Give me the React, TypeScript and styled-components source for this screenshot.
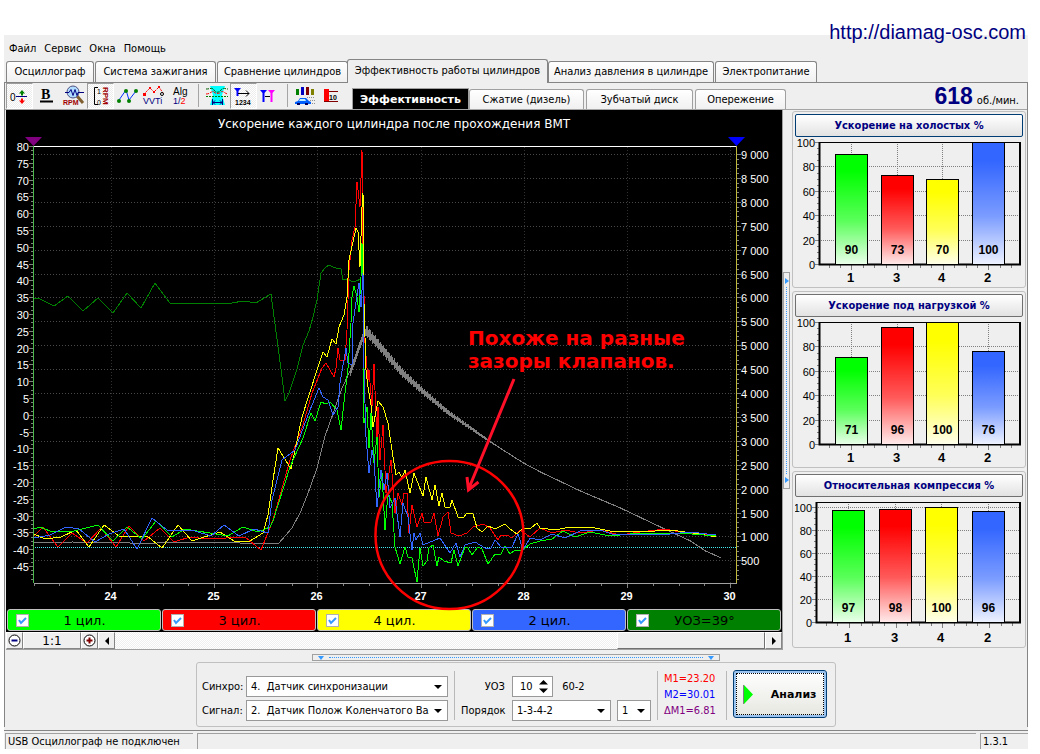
import React, { useState } from "react";
import styled, { createGlobalStyle, css } from "styled-components";

const UI = `"DejaVu Sans Condensed", "DejaVu Sans", "Liberation Sans", sans-serif`;
const WIDE = `"DejaVu Sans", "Liberation Sans", sans-serif`;
const ARIAL = `"Liberation Sans", sans-serif`;

const GlobalStyle = createGlobalStyle`
  * { box-sizing: border-box; }
  body { margin: 0; background: #fff; color: #000; font: 11px ${UI}; }
  button, input, select { font: inherit; color: inherit; margin: 0; }
`;

const Page = styled.div`
  padding: 0 12px 0 4px;
`;

const Banner = styled.header`
  height: 35px;
  padding: 20px 2px 0 0;
  text-align: right;
  position: relative;
`;

const SiteLink = styled.a`
  color: #000080;
  font: 20px/24px ${ARIAL};
  text-decoration: none;
`;

const AppWindow = styled.main`
  background: #efefef;
`;

const MenuBar = styled.nav`
  display: flex;
  gap: 8px;
  height: 24px;
  padding: 0 5px;
`;

const MenuItem = styled.button`
  border: 0;
  padding: 2px 0 0;
  background: none;
`;

const Tabs = styled.div`
  display: flex;
  align-items: flex-end;
  height: 23px;
  padding-left: 2px;
`;

const Tab = styled.button<{ $width: number; $active?: boolean }>`
  width: ${(p) => p.$width}px;
  height: 21px;
  margin-right: 1px;
  padding: 0 0 1px;
  white-space: nowrap;
  border: 1px solid #858585;
  border-bottom: 0;
  border-radius: 3px 3px 0 0;
  background: linear-gradient(#fff, #f0f0f0);
  ${(p) =>
    p.$active &&
    css`
      height: 24px;
      margin: 0 0 -1px -2px;
      padding-bottom: 3px;
      background: #efefef;
      z-index: 1;
    `}
`;

const TabPage = styled.div`
  border: solid #858585;
  border-width: 1px 1px 0;
`;

const ToolBar = styled.div`
  display: flex;
  align-items: flex-end;
  height: 27px;
  border-bottom: 1px solid #a5a5a5;
`;

const Tools = styled.div`
  display: flex;
  align-self: stretch;
  width: 347px;
  padding-left: 1px;
`;

const Tool = styled.button<{ $pressed?: boolean }>`
  width: 27px;
  height: 26px;
  padding: 0;
  border: 1px solid transparent;
  background: none;
  svg {
    display: block;
  }
  ${(p) =>
    p.$pressed &&
    css`
      border-color: #9c9c9c #fff #fff #9c9c9c;
      background: repeating-conic-gradient(#fff 0 25%, #ececec 0 50%) 0 0 / 2px 2px;
    `}
`;

const ToolLine = styled.span`
  width: 1px;
  margin: 1px 4px 2px 3px;
  background: #a5a5a5;
`;

const SubTab = styled.button<{ $width: number; $active?: boolean }>`
  width: ${(p) => p.$width}px;
  height: 20px;
  margin-right: 2px;
  padding: 0;
  border: 1px solid #a0a0a0;
  border-bottom: 0;
  border-radius: 3px 3px 0 0;
  background: linear-gradient(#fff, #f0f0f0);
  ${(p) =>
    p.$active &&
    css`
      height: 21px;
      margin-right: 0;
      border-radius: 0;
      background: #000;
      color: #fff;
      font: bold 11px ${WIDE};
    `}
`;

const Rpm = styled.div`
  display: flex;
  align-items: baseline;
  gap: 4px;
  margin-left: auto;
  padding-right: 8px;
  b {
    color: #000080;
    font: bold 23px/26px ${ARIAL};
  }
`;

const Work = styled.div`
  display: flex;
`;

const ChartColumn = styled.section`
  flex: 1;
  min-width: 0;
  margin-left: 1px;
`;

const ChartSvg = styled.svg`
  display: block;
  position: relative;
  width: 100%;
  overflow: visible;
  background: #000;
  pointer-events: none;
`;

const Legend = styled.div`
  display: grid;
  grid-template-columns: repeat(5, 1fr);
  gap: 1px;
  padding: 1px;
  background: #000;
`;

const LegendItem = styled.label<{ $color: string }>`
  display: flex;
  align-items: center;
  height: 22px;
  padding: 0 8px;
  border: 1px solid #c0c0c0;
  border-radius: 3px;
  background: ${(p) => p.$color};
  font: 13px ${WIDE};
  input {
    appearance: none;
    width: 13px;
    height: 13px;
    border: 1px solid #b0b0b0;
    background: #fff;
  }
  input:checked {
    background: #fff
      url("data:image/svg+xml,%3Csvg xmlns='http://www.w3.org/2000/svg' viewBox='0 0 11 11'%3E%3Cpath d='M2 5l2 3 5-5' fill='none' stroke='%233399ff' stroke-width='2'/%3E%3C/svg%3E");
  }
  span {
    flex: 1;
    padding-right: 12px;
    text-align: center;
  }
`;

const ScrollRow = styled.div`
  display: flex;
  height: 18px;
  border-bottom: 1px solid #a0a0a0;
  background: #efefef;
`;

const FlatButton = styled.button<{ $width?: number }>`
  width: ${(p) => p.$width || 17}px;
  padding: 0;
  border: 1px solid;
  border-color: #fff #858585 #858585 #fff;
  background: #efefef;
  font: 12px ${WIDE};
  svg {
    display: block;
    margin: auto;
  }
`;

const Track = styled.div`
  flex: 1;
  display: flex;
  justify-content: flex-end;
  background: repeating-conic-gradient(#fff 0 25%, #efefef 0 50%) 0 0 / 2px 2px;
`;

const Thumb = styled.div`
  width: 148px;
  border: 1px solid;
  border-color: #fff #707070 #707070 #fff;
  background: #efefef;
`;

const SideSplitter = styled.div`
  display: flex;
  flex-direction: column;
  justify-content: center;
  width: 10px;
  border-left: 1px solid #a0a0a0;
`;

const SideHandle = styled.div`
  display: flex;
  flex-direction: column;
  align-items: center;
  justify-content: space-between;
  width: 7px;
  height: 217px;
  padding: 5px 0;
  border: 1px solid #a0a0a0;
  i {
    border: solid transparent;
    border-width: 3px 0 3px 4px;
    border-left-color: #3399ff;
  }
  span {
    flex: 1;
    margin: 3px 0;
    border-left: 1px dotted #3399ff;
  }
`;

const BottomSplitter = styled.div`
  display: flex;
  align-items: center;
  gap: 5px;
  width: 408px;
  height: 7px;
  margin: 4px auto 1px;
  padding: 0 5px;
  border: 1px solid #a0a0a0;
  i {
    border: solid transparent;
    border-width: 4px 3px 0;
    border-top-color: #3399ff;
  }
  span {
    flex: 1;
    border-top: 1px dotted #3399ff;
  }
`;

const SideColumn = styled.aside`
  display: flex;
  flex-direction: column;
  gap: 3px;
  width: 235px;
  padding: 1px 1px 0 0;
`;

const Group = styled.section`
  padding: 2px;
  border: 1px solid #c0c0c0;
  border-radius: 3px;
  svg {
    display: block;
    width: 100%;
  }
`;

const GroupButton = styled.button<{ $hot?: boolean }>`
  display: block;
  width: 100%;
  height: 23px;
  padding: 0;
  border: 1px solid ${(p) => (p.$hot ? "#003c74" : "#707070")};
  border-radius: 2px;
  background: linear-gradient(#fff, #e2e2e2);
  color: #000080;
  font-weight: bold;
`;

const Controls = styled.form`
  display: flex;
  justify-content: center;
  gap: 6px;
  width: 640px;
  height: 65px;
  margin: 0 auto;
  padding: 7px 5px 0;
  border: 1px solid #c0c0c0;
  border-radius: 3px;
`;

const Fields = styled.div<{ $labels: number }>`
  display: grid;
  grid-template-columns: ${(p) => p.$labels}px auto;
  grid-auto-rows: 21px;
  align-content: center;
  align-items: center;
  gap: 3px 7px;
  flex: ${(p) => (p.$labels === 37 ? 1 : "none")};
`;

const FieldRow = styled.div`
  display: flex;
  align-items: center;
  gap: 6px;
`;

const RightLabel = styled.label`
  text-align: right;
`;

const SelectBox = styled.div<{ $width: number }>`
  position: relative;
  width: ${(p) => p.$width}px;
  &::after {
    content: "";
    position: absolute;
    right: 6px;
    top: 9px;
    border: solid transparent;
    border-width: 4px 4px 0;
    border-top-color: #000;
    pointer-events: none;
  }
  select {
    appearance: none;
    display: block;
    width: 100%;
    height: 21px;
    padding: 0 18px 0 4px;
    border: 1px solid #999;
    border-radius: 0;
    background: #fff;
    white-space: pre;
  }
`;

const Spin = styled.div`
  display: flex;
  align-items: center;
  width: 41px;
  height: 21px;
  border: 1px solid #999;
  background: #fff;
  input {
    appearance: textfield;
    width: 26px;
    padding: 0 0 0 7px;
    border: 0;
    background: none;
  }
  input::-webkit-inner-spin-button {
    display: none;
  }
`;

const Divider = styled.span`
  width: 1px;
  margin: 1px 0 6px;
  background: #b8b8b8;
`;

const Marks = styled.div`
  width: 58px;
  padding-top: 1px;
  line-height: 16px;
`;

const Mark = styled.div<{ $color: string }>`
  color: ${(p) => p.$color};
`;

const AnalyzeButton = styled.button`
  display: flex;
  align-items: center;
  gap: 18px;
  width: 97px;
  height: 48px;
  margin-right: 3px;
  padding: 0 9px;
  border: 1px solid #003c74;
  border-radius: 3px;
  outline: 1px dotted #000;
  outline-offset: -4px;
  background: linear-gradient(#fff, #e6e6e0);
  box-shadow: inset 0 0 0 2px #9cc4f0;
  font: bold 11px ${WIDE};
`;

const StatusBar = styled.footer`
  display: flex;
  gap: 4px;
  height: 19px;
  margin-top: 3px;
  padding: 2px 0 0 1px;
  border-top: 1px solid #858585;
`;

const StatusCell = styled.div<{ $width?: number }>`
  flex: ${(p) => (p.$width ? "none" : 1)};
  width: ${(p) => p.$width}px;
  padding: 1px 2px;
  line-height: 14px;
  white-space: nowrap;
  border: solid #a0a0a0;
  border-width: 1px 0 0 1px;
`;

/* ---------- traces of the main chart ---------- */

const ADVANCE =
  "34,298 40,299 54,306 68,296 83,311 98,298 113,313 127,293 141,308 155,283 170,303 232,303 243,301 256,303 271,294 281,369 285,401 289,393 297,369 303,345 309,331 313,317 317,300 321,273 325,268 329,265 333,267 336,268 341,269 343,280 348,279 351,281 356,281 361,279";
const CYL1 =
  "34,529 40,527 50,531 70,532 98,525 113,541 127,527 142,539 156,521 172,537 185,529 228,536 243,527 258,532 270,527 273,521 290,467 303,438 311,413 315,421 321,402 326,404 330,402 337,410 341,430 345,393 348,368 351,323 352,297 354,286 357,297 359,312 361,277 362,243 363,277 364,423 367,407 369,448 371,413 374,463 377,437 379,497 382,473 385,530 388,493 392,503 395,547 400,564 405,547 408,557 412,558 417,582 420,548 423,566 427,561 429,548 433,545 437,566 439,557 444,561 451,563 454,550 458,566 465,547 468,548 472,555 478,547 482,549 488,564 495,554 501,554 505,546 510,554 515,550 523,550 530,544 540,541 552,539 563,531 575,537 590,532 610,536 640,533 680,533 716,536";
const CYL3 =
  "34,536 43,527 58,547 72,533 87,543 101,528 116,547 129,526 144,541 160,528 174,542 190,537 208,539 245,537 261,550 273,520 290,460 303,425 312,393 322,368 326,363 330,370 334,377 336,368 338,348 340,360 345,360 347,330 349,270 352,240 355,227 357,182 360,207 362,150 363,247 365,343 368,380 369,370 372,407 374,364 377,443 378,407 380,460 383,425 386,493 391,460 395,513 398,493 402,505 404,493 407,493 409,533 412,505 417,527 422,513 424,522 431,522 434,513 438,536 443,517 448,512 451,533 459,536 467,533 473,527 483,524 490,528 498,540 501,535 507,535 512,538 520,530 530,537 540,528 552,533 565,530 580,533 600,530 620,535 640,532 665,529 680,532 716,536";
const CYL4 =
  "34,534 45,539 61,537 76,530 89,547 104,525 119,536 147,536 162,548 178,525 192,541 220,532 234,541 250,541 263,533 268,515 273,480 278,448 291,469 302,417 317,370 323,352 327,357 332,339 336,344 339,327 344,315 347,297 349,260 356,228 358,232 360,267 362,207 363,193 364,303 366,370 368,387 371,405 373,427 378,401 383,407 388,423 393,457 396,475 399,472 402,478 405,470 410,493 414,473 419,486 423,496 426,477 432,500 435,485 439,506 442,493 445,507 450,507 452,500 458,517 463,518 467,513 473,514 477,528 482,532 488,526 493,528 497,528 505,524 510,529 517,534 523,528 530,529 537,523 540,528 555,530 570,527 595,528 610,531 640,532 670,530 700,534 716,537";
const CYL2 =
  "34,538 50,535 66,527 79,529 95,542 109,534 124,529 137,549 152,518 167,530 195,531 211,536 224,525 239,536 254,529 268,533 272,500 282,460 295,450 310,410 319,388 323,397 328,400 333,415 338,407 340,383 346,348 348,363 352,365 353,323 356,302 359,283 361,307 363,273 364,368 366,437 369,473 372,450 374,460 377,507 381,470 384,490 387,473 390,508 395,498 400,537 403,503 408,517 412,550 414,533 416,540 420,533 423,545 440,538 450,553 456,543 460,557 465,545 475,542 485,548 491,548 495,540 502,548 512,547 518,534 523,550 530,538 540,540 552,534 565,538 580,531 600,530 615,535 640,534 670,534 690,532 716,535";
const SPEED_RISE =
  "34,543 50,542 61,543 72,542 130,543 150,544 165,542 240,543 267,544 279,543 292,528 301,511 310,488 317,468 325,436 334,411 342,388 351,369";

const SPEED_FALL = [
  [350, 372], [357, 352], [363, 335], [366, 331], [380, 347], [401, 372], [422, 391],
  [447, 412], [470, 428], [490, 442], [523, 463], [540, 472], [580, 491], [620, 508],
  [660, 527], [690, 541], [705, 551], [721, 558],
];

// the crank speed trace is noisy at high rpm and calms down as it falls
const noisySpeed = () => {
  let d = "";
  for (let i = 0; i < SPEED_FALL.length - 1; i++) {
    const [x0, y0] = SPEED_FALL[i];
    const [x1, y1] = SPEED_FALL[i + 1];
    for (let x = x0; x < x1; x++) {
      const y = y0 + ((y1 - y0) * (x - x0)) / (x1 - x0);
      const noise = 0.75 + 0.25 * Math.sin(x * 2.3);
      const amp = x < 364 ? 4 : Math.max(0.6, (6.5 - (x - 364) / 24) * noise);
      d += `M${x}.5 ${Math.round(y - amp)}V${Math.round(y + amp)}`;
    }
  }
  return d;
};

const range = (n: number) => Array.from({ length: n }, (_, i) => i);

function MainChart() {
  const leftY = (v: number) => Math.round(146 + (80 - v) * 3.36) + 0.5;
  const rightY = (v: number) => Math.round(154 + ((9000 - v) * 23.9) / 500) + 0.5;
  const gridX = (v: number) => Math.round(111 + (v - 24) * 103.2) + 0.5;
  const traces = [
    [CYL3, "#ff0000"],
    [CYL4, "#ffff00"],
    [CYL1, "#00ff00"],
    [CYL2, "#3366ff"],
  ];
  return (
    <ChartSvg viewBox="6 110 776 498" fontFamily={ARIAL} fontSize="11" fill="#fff">
      <text x="394" y="128" textAnchor="middle" fontSize="12" fontFamily={WIDE}>
        Ускорение каждого цилиндра после прохождения ВМТ
      </text>
      <g stroke="#484848" strokeDasharray="1 2" shapeRendering="crispEdges">
        {range(18).map((i) => (
          <path key={i} d={`M35 ${rightY(500 + i * 500)}H736`} />
        ))}
        {range(7).map((i) => (
          <path key={i} d={`M${gridX(24 + i)} 147V583`} stroke="#303030" />
        ))}
      </g>
      <path d="M35 547.5H736" stroke="#40e8f0" strokeDasharray="1 1" />
      <path d="M34 583.5H737" stroke="#a0a0a0" />
      <path d="M34 146.5H737" stroke="#fff" />
      <g stroke="#808080">
        {range(104).map((i) => (
          <path key={i} d={`M${i % 4 ? 31 : 29} ${leftY(80 - i * 1.25)}H33`} />
        ))}
        {range(90).map((i) => (
          <path key={i} d={`M737 ${rightY(9000 - i * 100)}h${i % 5 ? 2 : 4}`} />
        ))}
        {range(28).map((i) => (
          <path key={i} d={`M${gridX(23.25 + i * 0.25)} 584v${i % 4 === 3 ? 4 : 2}`} />
        ))}
      </g>
      <path d="M33.5 146V583" stroke="#4cb84c" />
      <path d="M736.5 146V583" stroke="#c0b838" />
      {range(26).map((i) => (
        <text key={i} x="29" y={leftY(80 - i * 5) + 4} textAnchor="end">
          {80 - i * 5}
        </text>
      ))}
      {range(18).map((i) => {
        const v = 9000 - i * 500;
        return (
          <text key={i} x="741" y={rightY(v) + 4}>
            {v >= 1000 ? `${Math.floor(v / 1000)} ${String(v % 1000).padStart(3, "0")}` : v}
          </text>
        );
      })}
      {range(7).map((i) => (
        <text key={i} x={gridX(24 + i) - 1} y="600" textAnchor="middle" fontWeight="bold">
          {24 + i}
        </text>
      ))}
      <g fill="none" strokeWidth="1" shapeRendering="crispEdges">
        <polyline points={ADVANCE} stroke="#008000" />
        <polyline points={SPEED_RISE} stroke="#808080" />
        <path d={noisySpeed()} stroke="#808080" />
        {traces.map(([points, color]) => (
          <polyline key={color} points={points} stroke={color} />
        ))}
      </g>
      <path d="M25 137h17l-8.500 9z" fill="#800080" />
      <path d="M728 137h17l-8.500 9z" fill="#0000ff" />
      <g fill="none" stroke="#ff0000" strokeWidth="2.500">
        <circle cx="449.500" cy="535" r="74" />
        <path d="M514 379L469 488M467 477l1.500 13 10-8" stroke="#ff0f28" strokeWidth="3" />
      </g>
      <g fill="#ff0000" fontFamily={WIDE} fontWeight="bold" fontSize="20">
        <text x="468" y="345">Похоже на разные</text>
        <text x="468" y="368">зазоры клапанов.</text>
      </g>
    </ChartSvg>
  );
}

const BARS = [
  { cyl: 1, color: "#00ff00" },
  { cyl: 3, color: "#ff0000" },
  { cyl: 4, color: "#ffff00" },
  { cyl: 2, color: "#3366ff" },
];

function BarChart(props: { id: string; values: number[]; max: number; left: number }) {
  const { id, values, max, left } = props;
  const bottom = max > 100 ? 125 : 127;
  const scale = (bottom - 5) / max;
  const y = (v: number) => Math.round(bottom - v * scale) + 0.5;
  const step = (193 - (left + 32)) / 3;
  const x = (i: number) => Math.round(left + 32 + i * step) + 0.5;
  return (
    <svg viewBox="0 0 228 148" fontFamily={ARIAL} fontSize="11">
      <defs>
        {BARS.map((b) => (
          <linearGradient key={b.cyl} id={id + b.cyl} x2="0" y2="1">
            <stop offset="0.15" stopColor={b.color} />
            <stop offset="0.6" stopColor={b.color} stopOpacity="0.65" />
            <stop offset="1" stopColor={b.color} stopOpacity="0.08" />
          </linearGradient>
        ))}
      </defs>
      <g stroke="#808080">
        {range(6).map((i) => (
          <path key={i} d={`M${left} ${y(i * 20)}H225`} strokeDasharray="1 1" />
        ))}
        {BARS.map((b, i) => (
          <path key={b.cyl} d={`M${x(i)} 5V${bottom}`} strokeDasharray="1 1" />
        ))}
        {range(21).map((i) => (
          <path key={i} d={`M${left - (i % 4 ? 2 : 4)} ${y(i * 5)}H${left}`} />
        ))}
        {range(17).map((i) => (
          <path
            key={i}
            d={`M${Math.round(left + 9 + (i * step) / 4 + 0.5) + 0.5} ${bottom + 1}v${i % 4 === 2 ? 5 : 3}`}
          />
        ))}
      </g>
      <path d={`M${left} 5.500H225`} stroke="#000" />
      <path d={`M${left + 0.5} 5V${bottom + 0.5}H225V5`} fill="none" stroke="#000" strokeWidth="2" />
      {range(6).map((i) => (
        <text key={i} x={left - 4} y={y(i * 20) + 4} textAnchor="end">
          {i * 20}
        </text>
      ))}
      {BARS.map((b, i) => (
        <g key={b.cyl} fontWeight="bold" fontSize="12" textAnchor="middle">
          <rect
            x={x(i) - 16}
            y={y(values[i])}
            width="32"
            height={bottom - y(values[i]) + 0.5}
            fill="#fff"
          />
          <rect
            x={x(i) - 16}
            y={y(values[i])}
            width="32"
            height={bottom - y(values[i]) + 0.5}
            fill={`url(#${id + b.cyl})`}
            stroke="#000"
          />
          <text x={x(i)} y={bottom - 10}>{values[i]}</text>
          <text x={x(i) - 1} y="145" fontSize="13">{b.cyl}</text>
        </g>
      ))}
    </svg>
  );
}

/* ---------- toolbar pictures, all on a 25x24 grid ---------- */

const Glyph = (props: { children: React.ReactNode }) => (
  <svg width="25" height="24" viewBox="0 0 25 24" fill="none" fontFamily={ARIAL} aria-hidden="true">
    {props.children}
  </svg>
);

const IconZero = () => (
  <Glyph>
    <text x="3" y="17" fontSize="10" fill="#000">0</text>
    <path d="M9 12.500h11" stroke="#000080" />
    <path d="M15 6l3 3.500h-2v2h-2v-2h-2z" fill="#008000" />
    <path d="M15 20l3-3.500h-2v-2h-2v2h-2z" fill="#ff0000" />
  </Glyph>
);

const IconBold = () => (
  <Glyph>
    <text x="7" y="15" fontSize="14" fontWeight="bold" fontFamily="Liberation Serif, serif" fill="#000">B</text>
    <path d="M6 17.500h13" stroke="#000" strokeWidth="2" />
  </Glyph>
);

const IconZoomRpm = () => (
  <Glyph>
    <path d="M16 12l6 7" stroke="#806030" strokeWidth="3" />
    <circle cx="12" cy="8" r="6" fill="#b0dcff" stroke="#505080" />
    <path d="M4 8.500h4l2-3 2 6 2-6 2 6 1-3h6" stroke="#000080" />
    <text x="2" y="21" fontSize="7" fontWeight="bold" fill="#a00000">RPM</text>
  </Glyph>
);

const IconScale = () => (
  <Glyph>
    <path d="M10 3.500H6.500V20.500H10" stroke="#000" />
    <text x="9" y="10" fontSize="7" fill="#000">1</text>
    <text x="9" y="21" fontSize="7" fill="#000">0</text>
    <text transform="translate(15 3) rotate(90)" fontSize="8" fontWeight="bold" fill="#a00000">RPM</text>
  </Glyph>
);

const IconTrend = () => (
  <Glyph>
    <path d="M4 16L11 6l3 10 7-9" stroke="#0030ff" />
    <g fill="#008000">
      <circle cx="4" cy="17" r="2" />
      <circle cx="11" cy="7" r="2" />
      <circle cx="14" cy="17" r="2" />
      <circle cx="21" cy="7" r="2" />
    </g>
  </Glyph>
);

const IconVvti = () => (
  <Glyph>
    <path d="M2 10l6-6 4 4 5-5 4 6" stroke="#ff0000" strokeDasharray="2 1" />
    <path d="M1 9h3v3H1zM7 3h2v2H7zM11 7h2v2h-2zM16 2h2v2h-2z" fill="#ff0000" />
    <circle cx="20" cy="10" r="1.500" stroke="#000" />
    <text x="1" y="20" fontSize="9" fill="#000080">VVTi</text>
  </Glyph>
);

const IconAlg = () => (
  <Glyph>
    <text x="4" y="11" fontSize="10" fill="#000">Alg</text>
    <text x="4" y="20" fontSize="9" fill="#000080">
      1/<tspan fill="#ff0000">2</tspan>
    </text>
  </Glyph>
);

const IconPhase = () => (
  <Glyph>
    <path d="M6 2h15l-3 9 3 10H6l3-10z" fill="#00ffff" />
    <path d="M2 5c5 0 6-2 8 1s5 3 7 0 4-1 7-1" stroke="#006000" strokeDasharray="3 1" />
    <path d="M2 10c5 0 6-4 8-2s5 2 7 0 4 2 7 2" stroke="#ff0000" strokeDasharray="3 1" />
    <path d="M2 12.500h22" stroke="#008000" strokeDasharray="2 1" />
    <path d="M8.500 15v6M18.500 15v6M9 18.500h9M11 16.500l-2 2 2 2M16 16.500l2 2-2 2" stroke="#000080" />
  </Glyph>
);

const IconOrder = () => (
  <Glyph>
    <path d="M3 4h7L7.500 7v5h-2V7z" fill="#0000ff" />
    <path d="M7 9.500h11M15 6.500l3 3-3 3" stroke="#000" />
    <text x="4" y="21" fontSize="7" fontWeight="bold" fill="#000">1234</text>
  </Glyph>
);

const IconMarkers = () => (
  <Glyph>
    <path d="M2 6h7L6.500 9v9h-2V9z" fill="#0000ff" />
    <path d="M10 6h7L14.500 9v9h-2V9z" fill="#ff00ff" />
    <path d="M7 12.500h5" stroke="#000" />
  </Glyph>
);

const IconCar = () => (
  <Glyph>
    <path d="M3 5h3v6H3z" fill="#008000" />
    <path d="M8 3h3v8H8z" fill="#0000c0" />
    <path d="M13 3h3v8h-3z" fill="#800000" />
    <path d="M18 5h3v6h-3z" fill="#808000" />
    <path d="M2 18l3-1 2-3h6l3 3 2 1v2H2z" fill="#0060ff" />
    <path d="M7 15h5l1 2H6z" fill="#c0f0ff" />
    <path d="M4 19h3v2H4zM12 19h3v2h-3z" fill="#000060" />
    <path d="M14 13.500h8M17 16.500h5M19 19.500h3" stroke="#909090" strokeDasharray="1 1" />
  </Glyph>
);

const IconLevel = () => (
  <Glyph>
    <path d="M4 5h5v12H4z" fill="#ff0000" />
    <path d="M9 7.500h9M4 17.500h14" stroke="#800000" />
    <text x="9" y="16" fontSize="7" fontWeight="bold" fill="#000">10</text>
  </Glyph>
);

const TABS: [string, number][] = [
  ["Осциллограф", 88],
  ["Система зажигания", 121],
  ["Сравнение цилиндров", 131],
  ["Эффективность работы цилиндров", 201],
  ["Анализ давления в цилиндре", 166],
  ["Электропитание", 102],
];

const SUB_TABS: [string, number][] = [
  ["Эффективность", 117],
  ["Сжатие (дизель)", 115],
  ["Зубчатый диск", 107],
  ["Опережение", 91],
];

const CHANNELS = [
  ["1 цил.", "#00ff00"],
  ["3 цил.", "#ff0000"],
  ["4 цил.", "#ffff00"],
  ["2 цил.", "#3366ff"],
  ["УОЗ=39°", "#008000"],
];

function App() {
  const [tab, setTab] = useState(3);
  const [subTab, setSubTab] = useState(0);

  return (
    <Page>
      <GlobalStyle />
      <Banner>
        <SiteLink href="http://diamag-osc.com">http://diamag-osc.com</SiteLink>
      </Banner>
      <AppWindow>
        <MenuBar>
          {["Файл", "Сервис", "Окна", "Помощь"].map((item) => (
            <MenuItem key={item}>{item}</MenuItem>
          ))}
        </MenuBar>
        <Tabs role="tablist">
          {TABS.map(([title, width], i) => (
            <Tab key={title} role="tab" $width={width} $active={i === tab} onClick={() => setTab(i)}>
              {title}
            </Tab>
          ))}
        </Tabs>
        <TabPage>
          <ToolBar>
            <Tools>
              <Tool $pressed aria-label="Ноль"><IconZero /></Tool>
              <Tool aria-label="Жирные линии"><IconBold /></Tool>
              <Tool aria-label="Лупа RPM"><IconZoomRpm /></Tool>
              <Tool $pressed aria-label="Шкала RPM"><IconScale /></Tool>
              <Tool aria-label="Тренд"><IconTrend /></Tool>
              <Tool aria-label="VVTi"><IconVvti /></Tool>
              <Tool aria-label="Алгоритм"><IconAlg /></Tool>
              <ToolLine />
              <Tool aria-label="Фаза"><IconPhase /></Tool>
              <Tool $pressed aria-label="Порядок цилиндров"><IconOrder /></Tool>
              <Tool aria-label="Между маркерами"><IconMarkers /></Tool>
              <ToolLine />
              <Tool aria-label="Автомобиль"><IconCar /></Tool>
              <Tool aria-label="Уровень"><IconLevel /></Tool>
            </Tools>
            {SUB_TABS.map(([title, width], i) => (
              <SubTab key={title} $width={width} $active={i === subTab} onClick={() => setSubTab(i)}>
                {title}
              </SubTab>
            ))}
            <Rpm>
              <b>618</b>об./мин.
            </Rpm>
          </ToolBar>
          <Work>
            <ChartColumn>
              <MainChart />
              <Legend>
                {CHANNELS.map(([name, color]) => (
                  <LegendItem key={name} $color={color}>
                    <input type="checkbox" defaultChecked />
                    <span>{name}</span>
                  </LegendItem>
                ))}
              </Legend>
              <ScrollRow>
                <FlatButton aria-label="Уменьшить">
                  <svg width="13" height="13" fill="#fff" stroke="#000">
                    <circle cx="6.500" cy="6.500" r="5.500" />
                    <path d="M3.500 6.500h6" stroke="#000080" strokeWidth="2" />
                  </svg>
                </FlatButton>
                <FlatButton $width={58}>1:1</FlatButton>
                <FlatButton aria-label="Увеличить">
                  <svg width="13" height="13" fill="#fff" stroke="#000">
                    <circle cx="6.500" cy="6.500" r="5.500" />
                    <path d="M3.500 6.500h6M6.500 3.500v6" stroke="#800000" strokeWidth="2" />
                  </svg>
                </FlatButton>
                <FlatButton aria-label="Влево">
                  <svg width="8" height="8"><path d="M6 0v8L2 4z" /></svg>
                </FlatButton>
                <Track>
                  <Thumb />
                </Track>
                <FlatButton aria-label="Вправо">
                  <svg width="8" height="8"><path d="M2 0v8l4-4z" /></svg>
                </FlatButton>
              </ScrollRow>
            </ChartColumn>
            <SideSplitter>
              <SideHandle><i /><span /><i /></SideHandle>
            </SideSplitter>
            <SideColumn>
              <Group>
                <GroupButton $hot>Ускорение на холостых %</GroupButton>
                <BarChart id="idle" values={[90, 73, 70, 100]} max={100} left={24} />
              </Group>
              <Group>
                <GroupButton>Ускорение под нагрузкой %</GroupButton>
                <BarChart id="load" values={[71, 96, 100, 76]} max={100} left={24} />
              </Group>
              <Group>
                <GroupButton>Относительная компрессия %</GroupButton>
                <BarChart id="comp" values={[97, 98, 100, 96]} max={104} left={21} />
              </Group>
            </SideColumn>
          </Work>
          <BottomSplitter><i /><span /><i /></BottomSplitter>
          <Controls onSubmit={(e) => e.preventDefault()}>
            <Fields $labels={37}>
              <label htmlFor="sync">Синхро:</label>
              <SelectBox $width={202}>
                <select id="sync"><option>4.{"\u00a0"} Датчик синхронизации</option></select>
              </SelectBox>
              <label htmlFor="signal">Сигнал:</label>
              <SelectBox $width={202}>
                <select id="signal"><option>2.{"\u00a0"} Датчик Полож Коленчатого Вала</option></select>
              </SelectBox>
            </Fields>
            <Divider />
            <Fields $labels={44}>
              <RightLabel htmlFor="uoz">УОЗ</RightLabel>
              <FieldRow>
                <Spin>
                  <input id="uoz" type="number" defaultValue={10} />
                  <svg width="9" height="13"><path d="M0 4.500h9L4.500 0zM0 8.500h9L4.500 13z" /></svg>
                </Spin>
                <span>{"\u00a0"}60-2</span>
              </FieldRow>
              <RightLabel htmlFor="order">Порядок</RightLabel>
              <FieldRow>
                <SelectBox $width={99}>
                  <select id="order"><option>1-3-4-2</option></select>
                </SelectBox>
                <SelectBox $width={34}>
                  <select aria-label="Цилиндр"><option>1</option></select>
                </SelectBox>
              </FieldRow>
            </Fields>
            <Divider />
            <Marks>
              <Mark $color="#ff0000">М1=23.20</Mark>
              <Mark $color="#0000ff">М2=30.01</Mark>
              <Mark $color="#800080">ΔМ1=6.81</Mark>
            </Marks>
            <Divider />
            <AnalyzeButton type="submit">
              <svg width="10" height="19">
                <path d="M1 0v19l9-9.500z" fill="#00ff00" />
                <path d="M0.500 0v19" stroke="#808080" />
              </svg>
              Анализ
            </AnalyzeButton>
          </Controls>
        </TabPage>
        <StatusBar>
          <StatusCell $width={188}>USB Осциллограф не подключен</StatusCell>
          <StatusCell />
          <StatusCell $width={48}>1.3.1</StatusCell>
        </StatusBar>
      </AppWindow>
    </Page>
  );
}

export default App;
